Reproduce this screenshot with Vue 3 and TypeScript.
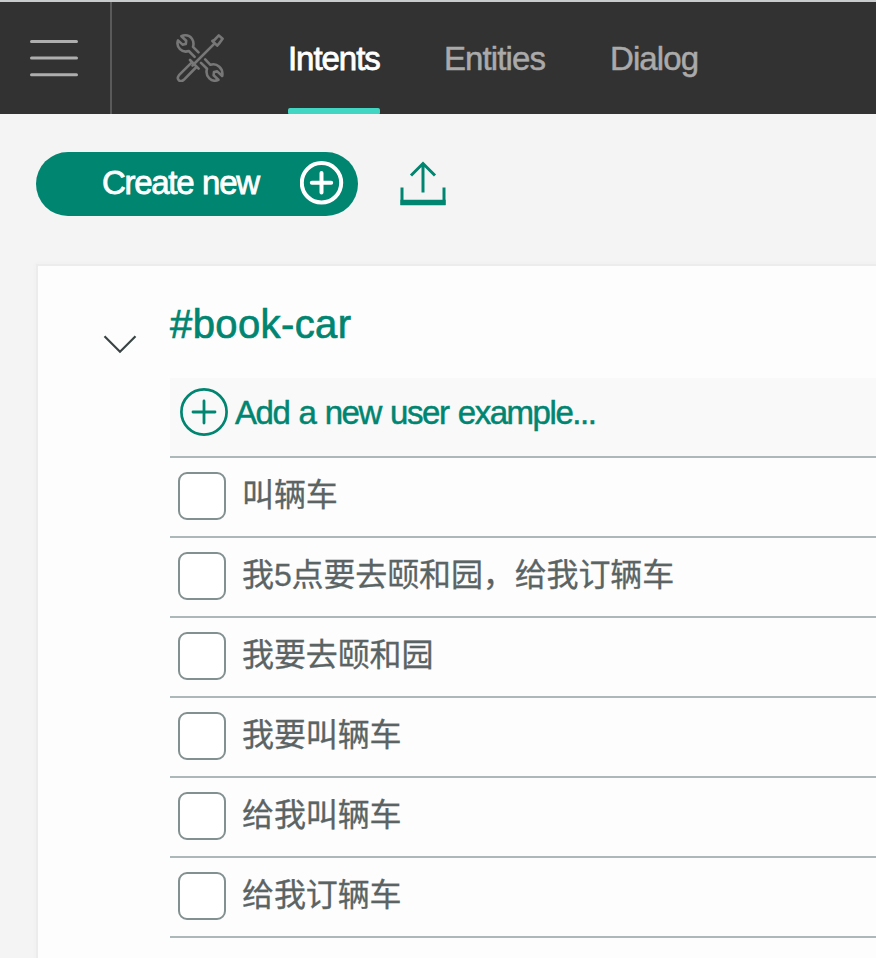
<script setup lang="ts">
import { ref } from 'vue'

interface Tab {
  id: string
  label: string
}

const tabs: Tab[] = [
  { id: 'intents', label: 'Intents' },
  { id: 'entities', label: 'Entities' },
  { id: 'dialog', label: 'Dialog' },
]
const activeTab = ref<string>('intents')

const examples = ref<{ text: string; checked: boolean }[]>([
  { text: '叫辆车', checked: false },
  { text: '我5点要去颐和园，给我订辆车', checked: false },
  { text: '我要去颐和园', checked: false },
  { text: '我要叫辆车', checked: false },
  { text: '给我叫辆车', checked: false },
  { text: '给我订辆车', checked: false },
])
</script>

<template>
  <div class="page">
    <header class="topbar">
      <button class="menu" type="button">
        <svg width="48" height="38" viewBox="0 0 48 38" fill="none" stroke="#aeaeae" stroke-width="3" stroke-linecap="round">
          <path d="M1.5 2.5H46.5M1.5 19H46.5M1.5 35.8H46.5" />
        </svg>
      </button>
      <svg class="tools" width="48" height="48" viewBox="0 0 48 48" fill="none" stroke="#777" stroke-width="2.6" stroke-linejoin="round" stroke-linecap="round">
        <path d="M22.5 18.3L17 12.8C18.8 7 15.2 1.3 9.3 1.3C8 1.3 6.5 1.6 5.4 2.2L10.2 6.8L9.8 10L6.6 10.6L2 6.4C-.3 13 6 19.4 12.8 17L18.6 22.8" />
        <path d="M29.2 25.4L34.4 30.8C41 28.6 47.6 34.4 46.2 42L41.2 37.4L38 38L37.6 41.3L42.4 45.8C35.6 49 28.8 42.4 31 34.8L25 28.9" />
        <path d="M38.4 9.6L16.5 31.5" />
        <path d="M36.4 7L38.4 6L42.8 1.4L46.6 4.8L43 9.6L41.2 11.6Z" />
        <path d="M14 26L22.6 34.6M15.8 28.4L3 41.2C-.2 45.2 4.2 49 7.8 45.8L20.4 33" />
      </svg>
      <nav class="tabs">
        <a
          v-for="tab in tabs"
          :key="tab.id"
          class="tab"
          :class="[tab.id, { active: activeTab === tab.id }]"
          @click="activeTab = tab.id"
        >{{ tab.label }}</a>
      </nav>
    </header>

    <div class="toolbar">
      <button class="create" type="button">
        <span>Create new</span>
        <svg width="44" height="44" viewBox="0 0 44 44" fill="none" stroke="#fff">
          <circle cx="21.5" cy="21.8" r="19.7" stroke-width="4" />
          <path d="M11.8 21.8H31.2M21.5 12.1V31.5" stroke-width="4" stroke-linecap="round" />
        </svg>
      </button>
      <svg class="upload" width="46" height="46" viewBox="0 0 46 46" fill="none" stroke="#008571">
        <path d="M23 31.5V3M11 14.5L23 2.5L35 14.5" stroke-width="3" />
        <path d="M2 26.5V44M44 26.5V44" stroke-width="3" />
        <path d="M.4 41.5H45.6" stroke-width="5.6" />
      </svg>
    </div>

    <main class="card">
      <svg class="chevron" width="34" height="20" viewBox="0 0 34 20" fill="none" stroke="#3a4444" stroke-width="2.2">
        <path d="M1.5 1.3L17 16.8L32.5 1.3" />
      </svg>
      <section class="intent">
        <h1 class="name">#book-car</h1>
        <div class="add">
          <svg width="48" height="48" viewBox="0 0 48 48" fill="none" stroke="#008571">
            <circle cx="24" cy="24" r="22.6" stroke-width="2.7" />
            <path d="M13 24H35M24 13V35" stroke-width="2.8" stroke-linecap="round" />
          </svg>
          <span class="prompt">Add a new user example...</span>
        </div>
        <label v-for="example in examples" :key="example.text" class="example">
          <input v-model="example.checked" type="checkbox" class="box" />
          <span>{{ example.text }}</span>
        </label>
      </section>
    </main>
  </div>
</template>

<style>
body {
  background: #f4f4f4;
}
</style>

<style scoped>
.page {
  box-sizing: border-box;
  height: 958px;
  overflow: hidden;
  display: flex;
  flex-direction: column;
  background: #f4f4f4;
  font-family: "Liberation Sans", "Noto Sans CJK SC", sans-serif;
  font-size: 33px;
}
button {
  border: 0;
  padding: 0;
  font: inherit;
}
svg {
  display: block;
  flex: none;
}
.topbar {
  box-sizing: border-box;
  flex: none;
  height: 114px;
  display: flex;
  background: #323232;
  border-top: 2px solid #c8cccc;
}
.menu {
  box-sizing: border-box;
  width: 112px;
  padding: 0 0 0 30px;
  background: none;
  border-right: 2px solid #5a5a5a;
}
.tools {
  margin: 32px 0 0 64px;
}
.tabs {
  display: flex;
  gap: 64px;
  margin-left: 64px;
}
.tab {
  box-sizing: border-box;
  height: 112px;
  line-height: 114px;
  position: relative;
  color: #aaa;
  letter-spacing: -0.9px;
  -webkit-text-stroke: 0.5px currentColor;
  white-space: nowrap;
}
.intents {
  width: 92px;
  letter-spacing: -1.05px;
}
.entities {
  width: 102px;
}
.active {
  color: #fff;
  -webkit-text-stroke-width: 0.8px;
}
.active::after {
  content: "";
  position: absolute;
  left: 0;
  right: 0;
  bottom: 0;
  height: 6px;
  border-radius: 2px 2px 1px 1px;
  background: #41d6c3;
}
.toolbar {
  flex: none;
  display: flex;
  padding: 38px 0 0 36px;
}
.create {
  box-sizing: border-box;
  width: 322px;
  height: 64px;
  padding: 0 14px 2px 66px;
  display: flex;
  align-items: center;
  justify-content: space-between;
  border-radius: 32px;
  background: #008571;
  color: #fff;
  letter-spacing: -1.3px;
  word-spacing: 1px;
  -webkit-text-stroke: 0.8px #fff;
}
.upload {
  margin: 9px 0 0 42px;
}
.card {
  flex: 1;
  display: flex;
  margin: 50px 0 0 38px;
  background: #fdfdfd;
  box-shadow: 0 0 0 2px #ececec, 0 0 2px 3px #f0f0f0;
}
.chevron {
  margin: 69px 0 0 65px;
}
.intent {
  flex: 1;
  margin-left: 33px;
}
.name {
  margin: 0;
  height: 112px;
  line-height: 116px;
  font-size: 40px;
  font-weight: 400;
  letter-spacing: 0.4px;
  color: #008571;
  -webkit-text-stroke: 0.7px #008571;
}
.add {
  box-sizing: border-box;
  height: 80px;
  display: flex;
  align-items: center;
  gap: 7px;
  padding: 0 0 10px 10px;
  background: #f9f9f9;
  border-bottom: 2px solid #adb9b9;
  color: #008571;
  letter-spacing: -1.45px;
  word-spacing: 1.5px;
  -webkit-text-stroke: 0.5px #008571;
  white-space: nowrap;
}
.prompt {
  padding-top: 2px;
}
.example {
  box-sizing: border-box;
  height: 80px;
  display: flex;
  align-items: flex-start;
  gap: 16px;
  padding: 14px 0 0 8px;
  border-bottom: 2px solid #adb9b9;
  color: #5a6464;
  font-size: 32px;
  line-height: 46px;
  letter-spacing: -0.12px;
  -webkit-text-stroke: 0.3px #5a6464;
}
.box {
  appearance: none;
  box-sizing: border-box;
  flex: none;
  width: 48px;
  height: 48px;
  margin: 0;
  border: 2px solid #839090;
  border-radius: 9px;
  background: #fff;
}
.box:checked {
  background: #008571;
}
</style>
